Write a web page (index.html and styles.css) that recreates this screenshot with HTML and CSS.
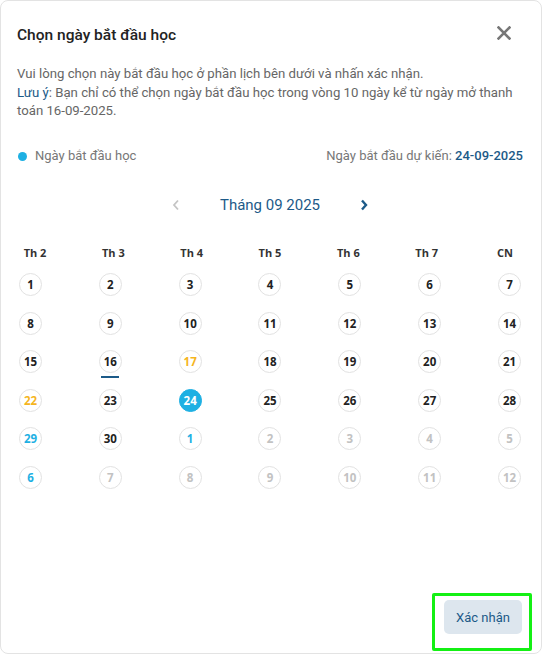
FILE: index.html
```html
<!DOCTYPE html>
<html lang="vi">
<head>
<meta charset="utf-8">
<title>Chọn ngày bắt đầu học</title>
<link rel="stylesheet" href="styles.css">
</head>
<body>
<div class="modal">
  <div class="header">
    <h2 class="title">Chọn ngày bắt đầu học</h2>
    <button class="close" aria-label="Đóng">
      <svg width="14" height="14" viewBox="0 0 14 14"><path d="M1.5 1.5 L12.5 12.5 M12.5 1.5 L1.5 12.5" stroke="#777" stroke-width="2.6" stroke-linecap="square"/></svg>
    </button>
  </div>
  <p class="desc">Vui lòng chọn này bắt đầu học ở phần lịch bên dưới và nhấn xác nhận.<br><span class="note">Lưu ý</span>: Bạn chỉ có thể chọn ngày bắt đầu học trong vòng 10 ngày kể từ ngày mở thanh toán 16-09-2025.</p>

  <div class="legend">
    <div class="legend-item"><span class="dot"></span>Ngày bắt đầu học</div>
    <div class="expected">Ngày bắt đầu dự kiến: <strong>24-09-2025</strong></div>
  </div>

  <div class="month-nav">
    <button class="nav-btn">
      <svg width="8" height="12" viewBox="0 0 8 12"><path d="M6 1.5 L2 6 L6 10.5" fill="none" stroke="#c4c4c4" stroke-width="1.8"/></svg>
    </button>
    <span class="month">Tháng 09 2025</span>
    <button class="nav-btn">
      <svg width="8" height="12" viewBox="0 0 8 12"><path d="M2 1.5 L6 6 L2 10.5" fill="none" stroke="#1c5a88" stroke-width="2.4"/></svg>
    </button>
  </div>

  <div class="weekdays">
    <span>Th 2</span><span>Th 3</span><span>Th 4</span><span>Th 5</span><span>Th 6</span><span>Th 7</span><span>CN</span>
  </div>

  <div class="days">
    <div class="week">
      <span class="day">1</span><span class="day">2</span><span class="day">3</span><span class="day">4</span><span class="day">5</span><span class="day">6</span><span class="day">7</span>
    </div>
    <div class="week">
      <span class="day">8</span><span class="day">9</span><span class="day">10</span><span class="day">11</span><span class="day">12</span><span class="day">13</span><span class="day">14</span>
    </div>
    <div class="week">
      <span class="day">15</span><span class="day today">16</span><span class="day warn">17</span><span class="day">18</span><span class="day">19</span><span class="day">20</span><span class="day">21</span>
    </div>
    <div class="week">
      <span class="day warn">22</span><span class="day">23</span><span class="day selected">24</span><span class="day">25</span><span class="day">26</span><span class="day">27</span><span class="day">28</span>
    </div>
    <div class="week">
      <span class="day info">29</span><span class="day">30</span><span class="day info">1</span><span class="day muted">2</span><span class="day muted">3</span><span class="day muted">4</span><span class="day muted">5</span>
    </div>
    <div class="week">
      <span class="day info">6</span><span class="day muted">7</span><span class="day muted">8</span><span class="day muted">9</span><span class="day muted">10</span><span class="day muted">11</span><span class="day muted">12</span>
    </div>
  </div>

  <div class="footer">
    <div class="highlight">
      <button class="confirm">Xác nhận</button>
    </div>
  </div>
</div>
</body>
</html>
```

FILE: styles.css
```css
* { box-sizing: border-box; }

html, body {
  margin: 0;
  padding: 0;
  background: #ffffff;
}

body {
  font-family: Roboto, "Noto Sans", sans-serif;
  color: #222;
}

.modal {
  width: 542px;
  height: 654px;
  border: 1px solid #e3e3e3;
  border-radius: 8px;
  padding: 23px 18px 0 16px;
  display: flex;
  flex-direction: column;
  background: #fff;
}

.header {
  display: flex;
  justify-content: space-between;
  align-items: flex-start;
}

.title {
  margin: 0;
  font-size: 15.5px;
  line-height: 22px;
  font-weight: 500;
  color: #222;
}

.close {
  width: 14px;
  height: 14px;
  padding: 0;
  margin: 2px 12px 0 0;
  border: 0;
  background: none;
  display: flex;
}

.desc {
  margin: 19px 0 0;
  font-size: 13.2px;
  line-height: 18.7px;
  color: #666;
}

.note {
  color: #1c5a88;
}

.legend {
  margin-top: 25px;
  display: flex;
  justify-content: space-between;
  align-items: center;
  font-size: 13px;
  line-height: 20px;
  color: #777;
}

.legend-item {
  display: flex;
  align-items: center;
  gap: 8px;
}

.dot {
  width: 9px;
  height: 9px;
  border-radius: 50%;
  background: #1eb0e3;
  margin-left: 1px;
}

.expected strong {
  font-weight: 500;
  color: #1c5a88;
}

.month-nav {
  margin-top: 27px;
  display: flex;
  justify-content: center;
  align-items: center;
  gap: 34px;
  height: 24px;
}

.nav-btn {
  width: 20px;
  height: 24px;
  padding: 0;
  border: 0;
  background: none;
  display: flex;
  align-items: center;
  justify-content: center;
}

.month {
  font-size: 15px;
  color: #1c5a88;
}

.weekdays {
  margin-top: 28px;
  display: flex;
  justify-content: space-between;
  font-family: "Open Sans", sans-serif;
  font-size: 11px;
  font-weight: 700;
  line-height: 16px;
  color: #333;
}

.weekdays span {
  width: 36px;
  text-align: center;
}

.days {
  margin-top: 12px;
  padding: 0 2px;
  display: flex;
  flex-direction: column;
  gap: 15.6px;
}

.week {
  display: flex;
  justify-content: space-between;
}

.day {
  position: relative;
  width: 23px;
  height: 23px;
  border-radius: 50%;
  border: 1.5px solid #e2e2e2;
  display: flex;
  align-items: center;
  justify-content: center;
  font-family: "Open Sans", sans-serif;
  font-size: 11.5px;
  font-weight: 700;
  color: #222;
}

.day.warn { color: #f5b51e; }
.day.info { color: #1eb0e3; }
.day.muted { color: #c2c2c2; }

.day.selected {
  background: #1eb0e3;
  border-color: #1eb0e3;
  color: #fff;
}

.day.today::after {
  content: "";
  position: absolute;
  left: 1px;
  right: 2px;
  bottom: -6px;
  height: 2px;
  background: #1c5a88;
}

.footer {
  margin-top: auto;
  margin-right: -9px;
  margin-bottom: 2px;
  display: flex;
  justify-content: flex-end;
}

.highlight {
  border: 3px solid #14f014;
  border-radius: 2px;
  padding: 4px 7px 14px 9px;
}

.confirm {
  width: 78px;
  height: 34px;
  border: 0;
  border-radius: 5px;
  background: #dde6ee;
  color: #1c5a88;
  font-family: Roboto, "Noto Sans", sans-serif;
  font-size: 13px;
  padding: 0;
}
```
